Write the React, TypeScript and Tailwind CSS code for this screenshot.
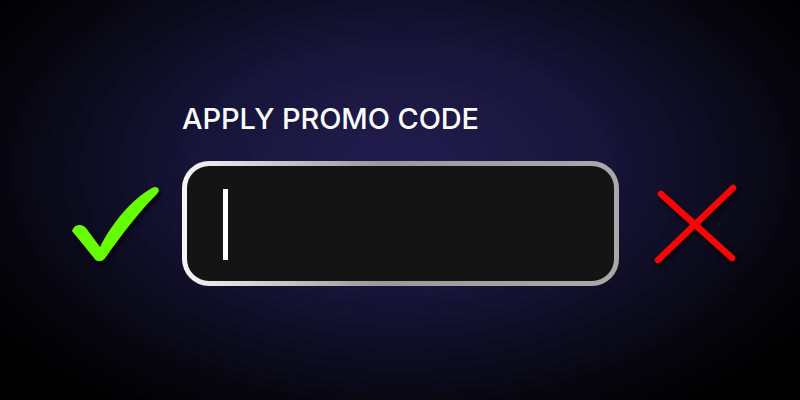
export default function App() {
  return (
    <div className="h-[400px] w-[800px] overflow-hidden bg-[radial-gradient(ellipse_62%_75%_at_50%_42%,#231d4f_0%,#17153a_40%,#07060f_80%,#000_100%)] font-['Inter','Liberation_Sans',sans-serif]">
      <div className="grid grid-cols-[90px_437px_100px] gap-x-[22px] gap-y-[24px] items-center pl-[70px] pt-[101px]">
        <div></div>
        <h1 className="text-[29px] leading-[36px] font-medium text-white tracking-[-0.1px]">APPLY PROMO CODE</h1>
        <div></div>

        {/* check */}
        <svg width="90" height="80" viewBox="0 0 90 80" className="self-center drop-shadow-[2px_3px_2px_rgba(0,0,0,0.85)]">
          <path
            d="M2,47 C4,40 12,39 16,44 L30,63 C42,39 62,15 82,4 C88,1 91,6 87,10 C68,29 50,53 36,73 C33,78 27,79 24,74 Z"
            fill="#66ff00"
          />
        </svg>

        {/* promo input */}
        <div className="h-[125px] rounded-[27px] p-[5px] bg-linear-to-r from-[#f6f6f6] via-[#9a9a9a] via-45% to-[#a9a9a9]">
          <div className="h-full w-full rounded-[22px] bg-[#141414] flex items-center pl-[36px]">
            <div className="w-[5px] h-[71px] bg-white mt-[1px]"></div>
          </div>
        </div>

        {/* cross */}
        <svg width="100" height="100" viewBox="0 0 100 100" className="drop-shadow-[2px_3px_2px_rgba(0,0,0,0.85)]">
          <g stroke="#ff0000" strokeWidth="6.5" strokeLinecap="round">
            <line x1="20" y1="20" x2="91" y2="84" />
            <line x1="92" y1="14" x2="17" y2="86" />
          </g>
        </svg>
      </div>
    </div>
  );
}
